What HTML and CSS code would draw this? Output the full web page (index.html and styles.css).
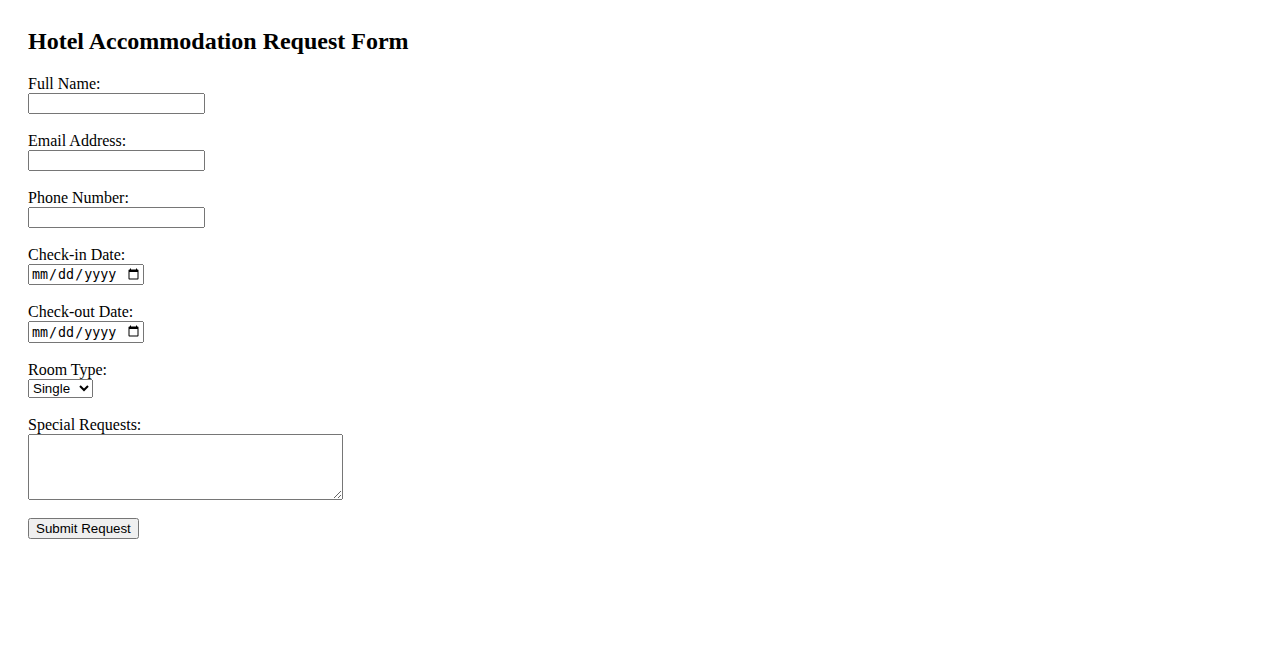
FILE: index.html
```html
<!DOCTYPE html>
<html lang="en">
<head>
<meta charset="utf-8">
<title>Hotel Accommodation Request Form</title>
<link rel="stylesheet" href="styles.css">
</head>
<body>
<h2 class="title">Hotel Accommodation Request Form</h2>
<form class="form">
<label for="name">Full Name:</label><br>
<input class="field" type="text" id="name"><br><br>
<label for="email">Email Address:</label><br>
<input class="field" type="email" id="email"><br><br>
<label for="phone">Phone Number:</label><br>
<input class="field" type="tel" id="phone"><br><br>
<label for="checkin">Check-in Date:</label><br>
<input class="date" type="date" id="checkin"><br><br>
<label for="checkout">Check-out Date:</label><br>
<input class="date" type="date" id="checkout"><br><br>
<label for="room">Room Type:</label><br>
<select class="select" id="room">
<option>Single</option>
<option>Double</option>
<option>Suite</option>
</select><br><br>
<label for="requests">Special Requests:</label><br>
<textarea class="area" id="requests"></textarea><br><br>
<button class="submit" type="button">Submit Request</button>
</form>
</body>
</html>
```
FILE: styles.css
```css
html, body {
  background: #fff;
}
body {
  margin: 0;
  padding: 8px 28px;
  font-family: "Liberation Serif", "Times New Roman", serif;
  font-size: 16px;
  color: #000;
}
.title {
  font-size: 24px;
  font-weight: bold;
  margin: 19.92px 0;
}
.form {
  margin: 0;
}
.field {
  font-family: "Liberation Sans", Arial, sans-serif;
  font-size: 13.333px;
  width: 177px;
  height: 21px;
  box-sizing: border-box;
}
.date {
  font-size: 13.333px;
  width: 116px;
  height: 21.5px;
  box-sizing: border-box;
}
.select {
  font-family: "Liberation Sans", Arial, sans-serif;
  font-size: 13.333px;
  height: 19px;
}
.area {
  width: 315px;
  height: 66px;
  box-sizing: border-box;
  vertical-align: bottom;
}
.submit {
  font-family: "Liberation Sans", Arial, sans-serif;
  font-size: 13.333px;
}
```
